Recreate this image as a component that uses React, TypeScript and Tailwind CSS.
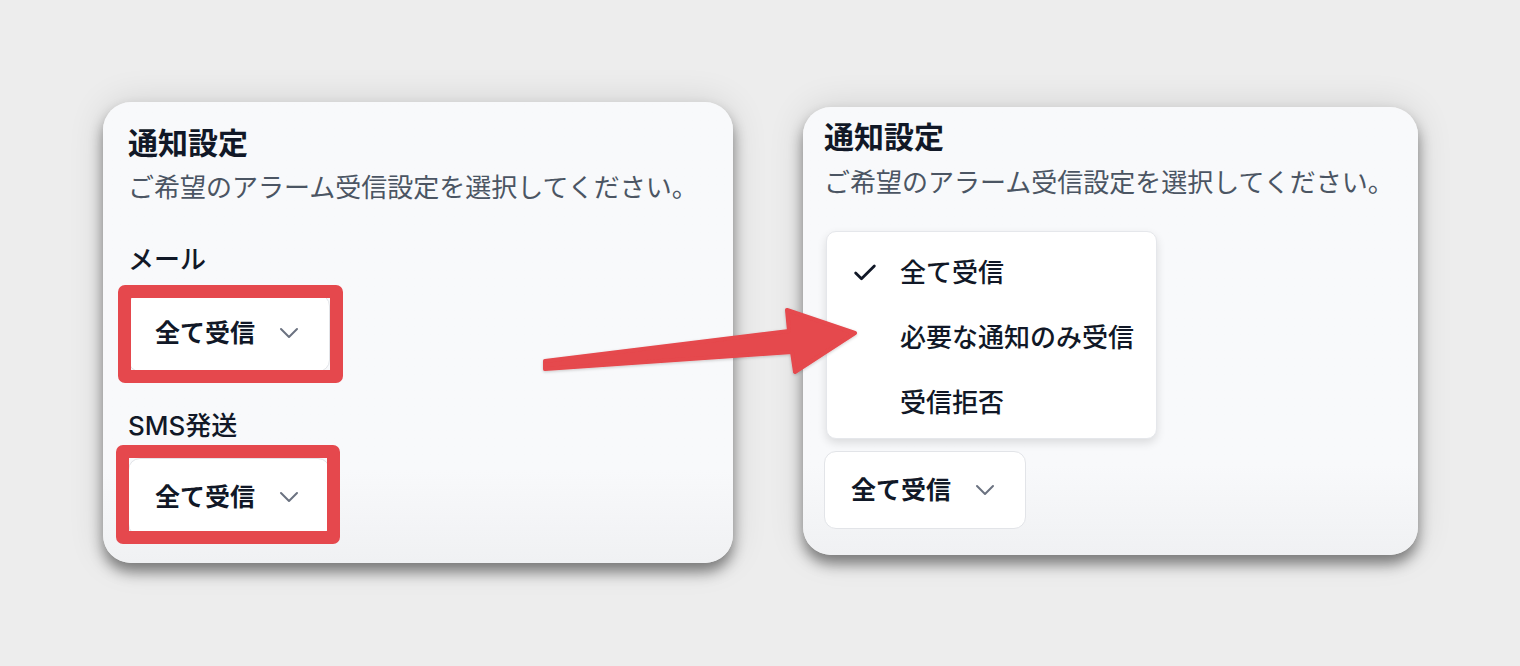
import { Check } from 'lucide-react';

const font = { fontFamily: 'Inter, "Noto Sans CJK JP", sans-serif' };

function Chevron() {
  return (
    <svg width="20" height="12" viewBox="0 0 20 12" fill="none" className="shrink-0">
      <path d="M2 2l8 8 8-8" stroke="#6b7280" strokeWidth="2" strokeLinecap="round" strokeLinejoin="round" />
    </svg>
  );
}

function SelectButton() {
  return (
    <div className="flex h-[78px] w-[202px] items-center gap-[24px] rounded-[12px] border border-[#e2e4e8] bg-white pl-[26px]">
      <span className="text-[25px] leading-[34px] font-bold text-[#111827]">全て受信</span>
      <Chevron />
    </div>
  );
}

function Highlighted({ left, top, width, height }: { left: number; top: number; width: number; height: number }) {
  return (
    <div className="relative w-[202px]">
      <SelectButton />
      <div
        className="pointer-events-none absolute rounded-[7px] border-[13px] border-[#e5484d]"
        style={{ left, top, width, height }}
      />
    </div>
  );
}

const options = ['全て受信', '必要な通知のみ受信', '受信拒否'];

export default function App() {
  return (
    <div className="relative h-[666px] w-[1520px] overflow-hidden bg-[#ededed]" style={font}>
      <div className="flex items-start gap-[70px] pl-[103px] pt-[102px]">
        {/* before */}
        <div className="flex h-[461px] w-[630px] flex-col rounded-[28px] bg-gradient-to-b from-[#f8f9fb] from-80% to-[#f0f1f3] pl-[25px] pt-[23px] shadow-[0_9px_14px_rgba(0,0,0,0.45),0_0_36px_rgba(0,0,0,0.12)]">
          <h2 className="text-[30px] leading-[36px] font-bold text-[#111827]">通知設定</h2>
          <p className="mt-[10px] text-[26px] leading-[34px] text-[#4b5563]">ご希望のアラーム受信設定を選択してください。</p>
          <div className="mt-[38px] text-[26px] leading-[34px] font-medium text-[#111827]">メール</div>
          <div className="mt-[17px]">
            <Highlighted left={-10} top={-9} width={225} height={98} />
          </div>
          <div className="mt-[37px] text-[26px] leading-[34px] font-medium text-[#111827]">SMS発送</div>
          <div className="mt-[15px]">
            <Highlighted left={-12} top={-13} width={224} height={99} />
          </div>
        </div>

        {/* after */}
        <div className="mt-[5px] flex h-[448px] w-[615px] flex-col rounded-[28px] bg-gradient-to-b from-[#f8f9fb] from-80% to-[#f0f1f3] pl-[21px] pt-[12px] shadow-[0_9px_14px_rgba(0,0,0,0.45),0_0_36px_rgba(0,0,0,0.12)]">
          <h2 className="text-[30px] leading-[36px] font-bold text-[#111827]">通知設定</h2>
          <p className="mt-[11px] text-[26px] leading-[34px] text-[#4b5563]">ご希望のアラーム受信設定を選択してください。</p>
          <div className="mt-[31px] ml-[2px] flex h-[208px] w-[331px] flex-col rounded-[10px] border border-[#e5e7eb] bg-white pt-[8px] shadow-[0_4px_10px_rgba(0,0,0,0.12)]">
            {options.map((o, i) => (
              <div key={o} className="flex h-[65px] items-center">
                <div className="flex w-[73px] justify-center pl-[2px]">
                  {i === 0 && <Check size={28} strokeWidth={2.4} className="text-[#111827]" />}
                </div>
                <span className="text-[26px] leading-[34px] font-medium text-[#111827]">{o}</span>
              </div>
            ))}
          </div>
          <div className="mt-[12px]">
            <SelectButton />
          </div>
        </div>
      </div>

      {/* annotation arrow */}
      <svg className="pointer-events-none absolute left-0 top-0" width="1520" height="666" viewBox="0 0 1520 666">
        <defs>
          <filter id="ash" x="-10%" y="-50%" width="120%" height="200%">
            <feDropShadow dx="0" dy="1" stdDeviation="1.5" floodColor="#000" floodOpacity="0.2" />
          </filter>
        </defs>
        <path
          d="M545 361 L789 331 L787 310 L855 333 L795 372 L792 352 L545 369 Z"
          fill="#e5484d"
          stroke="#e5484d"
          strokeWidth="4"
          strokeLinejoin="round"
          filter="url(#ash)"
        />
      </svg>
    </div>
  );
}
